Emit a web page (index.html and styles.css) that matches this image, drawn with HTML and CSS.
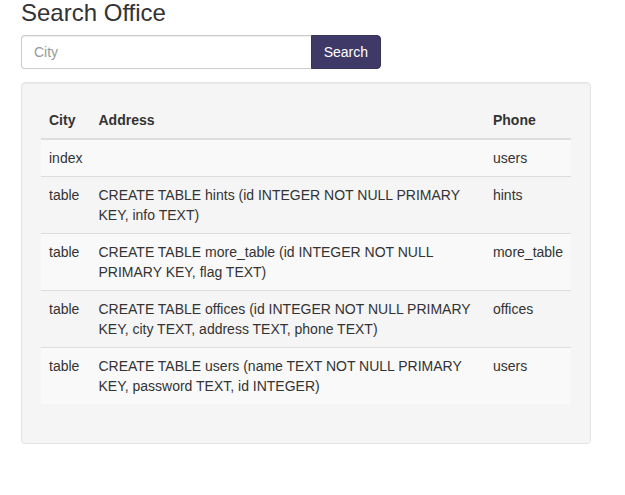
FILE: index.html
```html
<!DOCTYPE html>
<html>
<head>
<meta charset="utf-8">
<link rel="stylesheet" href="styles.css">
</head>
<body>
<div class="container">
  <h3 class="title">Search Office</h3>
  <form class="search">
    <input class="search-input" type="text" placeholder="City">
    <button class="search-btn" type="button">Search</button>
  </form>
  <div class="well">
    <table class="results">
      <thead>
        <tr><th>City</th><th>Address</th><th>Phone</th></tr>
      </thead>
      <tbody>
        <tr><td>index</td><td></td><td>users</td></tr>
        <tr><td>table</td><td>CREATE TABLE hints (id INTEGER NOT NULL PRIMARY KEY, info TEXT)</td><td>hints</td></tr>
        <tr><td>table</td><td>CREATE TABLE more_table (id INTEGER NOT NULL PRIMARY KEY, flag TEXT)</td><td>more_table</td></tr>
        <tr><td>table</td><td>CREATE TABLE offices (id INTEGER NOT NULL PRIMARY KEY, city TEXT, address TEXT, phone TEXT)</td><td>offices</td></tr>
        <tr><td>table</td><td>CREATE TABLE users (name TEXT NOT NULL PRIMARY KEY, password TEXT, id INTEGER)</td><td>users</td></tr>
      </tbody>
    </table>
  </div>
</div>
</body>
</html>
```
FILE: styles.css
```css
* { box-sizing: border-box; }
html, body {
  margin: 0;
  background: #fff;
}
body {
  font-family: "Liberation Sans", Arial, sans-serif;
  font-size: 14px;
  line-height: 20px;
  color: #333;
}
.container {
  padding: 0 34px 0 21px;
}
.title {
  margin: 0 0 9px;
  font-size: 24px;
  line-height: 1.1;
  font-weight: normal;
  color: #333;
}
.search {
  display: flex;
  width: 360px;
  margin: 0 0 13px;
}
.search-input {
  flex: 1;
  height: 34px;
  padding: 6px 12px;
  font-family: inherit;
  font-size: 14px;
  color: #555;
  background: #fff;
  border: 1px solid #ccc;
  border-right: 0;
  border-radius: 4px 0 0 4px;
  box-shadow: inset 0 1px 1px rgba(0,0,0,0.075);
  outline: none;
}
.search-input::placeholder { color: #999; }
.search-btn {
  height: 34px;
  padding: 6px 12px;
  font-family: inherit;
  font-size: 14px;
  line-height: 20px;
  color: #fff;
  background: #3f3968;
  border: 1px solid #37315c;
  border-radius: 0 4px 4px 0;
}
.well {
  width: 570px;
  padding: 19px;
  background: #f5f5f5;
  border: 1px solid #e3e3e3;
  border-radius: 4px;
  box-shadow: inset 0 1px 1px rgba(0,0,0,0.05);
}
.results {
  width: 100%;
  margin-bottom: 20px;
  border-collapse: collapse;
  border-spacing: 0;
}
.results th, .results td {
  padding: 8px;
  text-align: left;
  vertical-align: top;
  line-height: 20px;
}
.results th {
  vertical-align: bottom;
  font-weight: bold;
  border-bottom: 2px solid #ddd;
}
.results tbody td { border-top: 1px solid #ddd; }
.results tbody tr:first-child td { border-top: 0; }
.results tbody tr:nth-child(odd) { background: #f9f9f9; }
```
